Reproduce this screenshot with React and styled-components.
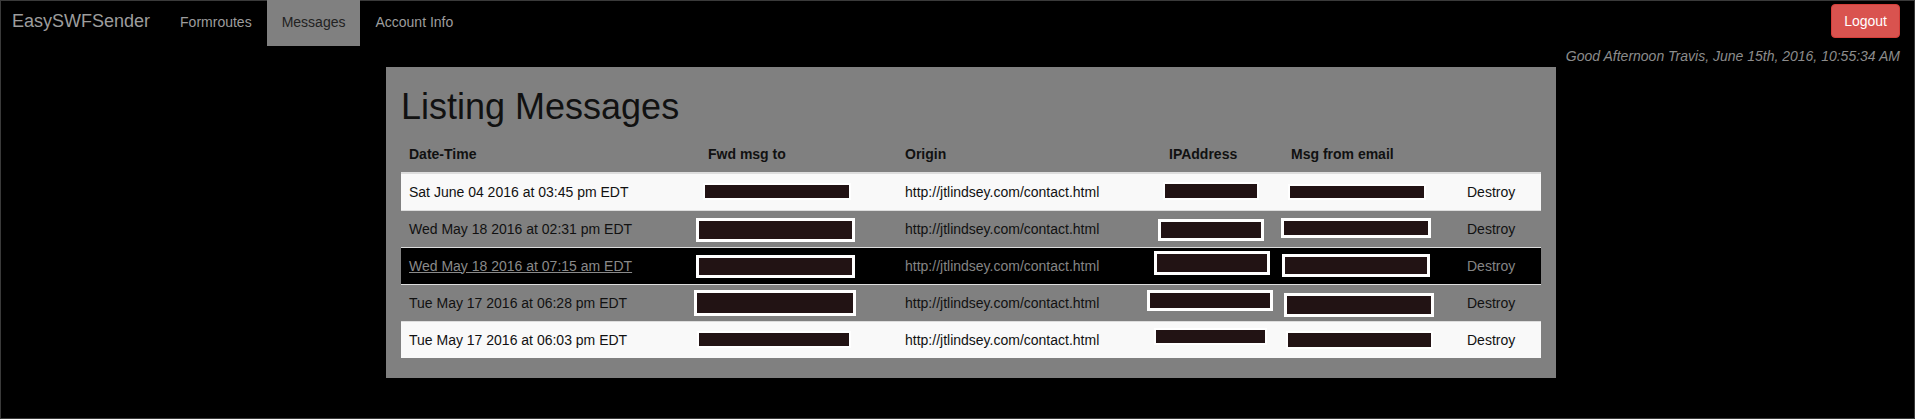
import React from "react";
import styled, { createGlobalStyle } from "styled-components";

const GlobalStyle = createGlobalStyle`
  html, body {
    margin: 0;
    padding: 0;
    background: #000;
    font-family: "Liberation Sans", Arial, sans-serif;
    font-size: 14px;
    line-height: 20px;
    color: #111;
  }
`;

const Page = styled.div`
  min-height: 419px;
  background: #000;
  box-shadow: inset 0 0 0 1px #3a3a3a;
`;

const Navbar = styled.nav`
  display: flex;
  align-items: flex-start;
  height: 46px;
  padding-right: 15px;
`;

const Brand = styled.a`
  padding: 11px 15px 15px 12px;
  font-size: 18px;
  line-height: 20px;
  color: #9d9d9d;
  text-decoration: none;
`;

const NavLinks = styled.ul`
  display: flex;
  margin: 0;
  padding: 0;
  list-style: none;
`;

const NavLink = styled.li`
  padding: 12px 15px 14px;
  line-height: 20px;
  color: ${props => (props.active ? "#222" : "#9d9d9d")};
  background: ${props => (props.active ? "#808080" : "transparent")};
`;

const LogoutButton = styled.button`
  margin: 4px 0 0 auto;
  padding: 6px 12px;
  font-family: inherit;
  font-size: 14px;
  line-height: 20px;
  color: #fff;
  background: #d9534f;
  border: 1px solid #d43f3a;
  border-radius: 4px;
`;

const Greeting = styled.div`
  padding-right: 15px;
  text-align: right;
  font-style: italic;
  color: #8c8c8c;
  line-height: 20px;
`;

const Panel = styled.main`
  width: 1140px;
  margin: 1px 0 0 386px;
  padding: 0 15px;
  background: #808080;
  overflow: hidden;
`;

const Title = styled.h1`
  margin: 20px 0 9px;
  font-size: 36px;
  font-weight: 500;
  line-height: 1.1;
  color: #111;
`;

const Table = styled.table`
  width: 100%;
  margin-bottom: 20px;
  border-collapse: collapse;
  table-layout: fixed;
`;

const Th = styled.th`
  padding: 8px;
  text-align: left;
  font-weight: bold;
  color: #111;
  border-bottom: 2px solid #ddd;
`;

const Row = styled.tr`
  background: ${props =>
    props.hover ? "#000" : props.striped ? "#f9f9f9" : "transparent"};
  color: ${props => (props.hover ? "#858585" : "#111")};
`;

const Td = styled.td`
  padding: 8px;
  vertical-align: middle;
  border-top: 1px solid #ddd;
  white-space: nowrap;
`;

const DateLink = styled.a`
  color: ${props => (props.hover ? "#8a8a8a" : "inherit")};
  text-decoration: ${props => (props.hover ? "underline" : "none")};
`;

const Redacted = styled.span`
  display: block;
  box-sizing: border-box;
  width: ${props => props.w}px;
  height: ${props => props.h}px;
  margin-left: ${props => props.x}px;
  margin-top: ${props => (20 - props.h) / 2 + props.y}px;
  margin-bottom: ${props => (20 - props.h) / 2 - props.y}px;
  background: #221314;
  border: ${props => props.b}px solid #fff;
`;

const rows = [
  {
    date: "Sat June 04 2016 at 03:45 pm EDT",
    fwd: { x: -5, y: 0, w: 148, h: 17, b: 2 },
    ip: { x: -6, y: -1, w: 96, h: 18, b: 2 },
    email: { x: -3, y: 0, w: 138, h: 16, b: 2 },
    striped: true,
  },
  {
    date: "Wed May 18 2016 at 02:31 pm EDT",
    fwd: { x: -12, y: 1, w: 159, h: 24, b: 3 },
    ip: { x: -11, y: 1, w: 106, h: 22, b: 3 },
    email: { x: -10, y: -1, w: 150, h: 20, b: 3 },
  },
  {
    date: "Wed May 18 2016 at 07:15 am EDT",
    fwd: { x: -12, y: 1, w: 159, h: 23, b: 3 },
    ip: { x: -15, y: -3, w: 116, h: 24, b: 3 },
    email: { x: -9, y: 0, w: 148, h: 23, b: 3 },
    striped: true,
    hover: true,
  },
  {
    date: "Tue May 17 2016 at 06:28 pm EDT",
    fwd: { x: -14, y: 0, w: 162, h: 26, b: 3 },
    ip: { x: -22, y: -2, w: 126, h: 21, b: 3 },
    email: { x: -7, y: 2, w: 150, h: 24, b: 3 },
  },
  {
    date: "Tue May 17 2016 at 06:03 pm EDT",
    fwd: { x: -11, y: 0, w: 154, h: 17, b: 2 },
    ip: { x: -15, y: -3, w: 113, h: 17, b: 2 },
    email: { x: -5, y: 0, w: 147, h: 18, b: 2 },
    striped: true,
  },
];

const columns = [
  { label: "Date-Time", width: 299 },
  { label: "Fwd msg to", width: 197 },
  { label: "Origin", width: 264 },
  { label: "IPAddress", width: 122 },
  { label: "Msg from email", width: 176 },
  { label: "", width: 82 },
];

const App = () => (
  <Page>
    <GlobalStyle />
    <Navbar>
      <Brand>EasySWFSender</Brand>
      <NavLinks>
        <NavLink>Formroutes</NavLink>
        <NavLink active>Messages</NavLink>
        <NavLink>Account Info</NavLink>
      </NavLinks>
      <LogoutButton>Logout</LogoutButton>
    </Navbar>
    <Greeting>Good Afternoon Travis, June 15th, 2016, 10:55:34 AM</Greeting>
    <Panel>
      <Title>Listing Messages</Title>
      <Table>
        <colgroup>
          {columns.map((c, i) => (
            <col key={i} style={{ width: c.width }} />
          ))}
        </colgroup>
        <thead>
          <tr>
            {columns.map((c, i) => (
              <Th key={i}>{c.label}</Th>
            ))}
          </tr>
        </thead>
        <tbody>
          {rows.map((r, i) => (
            <Row key={i} striped={r.striped} hover={r.hover}>
              <Td>
                <DateLink hover={r.hover}>{r.date}</DateLink>
              </Td>
              <Td>
                <Redacted {...r.fwd} />
              </Td>
              <Td>http://jtlindsey.com/contact.html</Td>
              <Td>
                <Redacted {...r.ip} />
              </Td>
              <Td>
                <Redacted {...r.email} />
              </Td>
              <Td>Destroy</Td>
            </Row>
          ))}
        </tbody>
      </Table>
    </Panel>
  </Page>
);

export default App;
